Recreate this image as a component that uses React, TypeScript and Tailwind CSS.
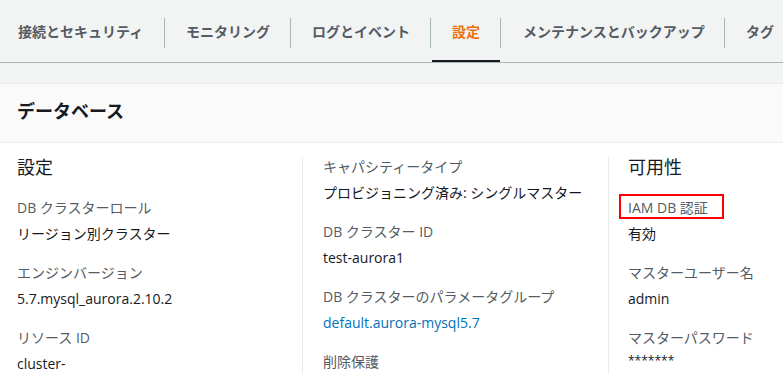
import React from "react";

const font = { fontFamily: '"Open Sans", "Noto Sans CJK JP", sans-serif' };

type Tab = { label: string; w: string; pl: string; active?: boolean };

const tabs: Tab[] = [
  { label: "接続とセキュリティ", w: "w-[164px]", pl: "pl-[18px]" },
  { label: "モニタリング", w: "w-[125px]", pl: "pl-[21px]" },
  { label: "ログとイベント", w: "w-[139px]", pl: "pl-[21px]" },
  { label: "設定", w: "w-[69px]", pl: "pl-[21px]", active: true },
  { label: "メンテナンスとバックアップ", w: "w-[223px]", pl: "pl-[22px]" },
  { label: "タグ", w: "w-[80px]", pl: "pl-[21px]" },
];

function Field({
  label,
  value,
  link,
  boxed,
}: {
  label: string;
  value?: string;
  link?: boolean;
  boxed?: boolean;
}) {
  return (
    <div className="flex flex-col">
      <div className="relative text-[14px] leading-[20px] text-[#545b64] whitespace-nowrap">
        {label}
        {boxed && (
          <span className="absolute left-[-9px] top-[-4px] w-[105px] h-[25px] border-2 border-[#ff0000]" />
        )}
      </div>
      {value !== undefined && (
        <div
          className={
            "mt-[6px] text-[14px] leading-[20px] whitespace-nowrap " +
            (link ? "text-[#0073bb]" : "text-[#16191f]")
          }
        >
          {value}
        </div>
      )}
    </div>
  );
}

export default function App() {
  return (
    <div className="w-full h-[374px] overflow-hidden bg-[#f2f3f3]" style={font}>
      {/* Tabs */}
      <div className="flex h-[63px] border-b border-[#aab7b8]">
        {tabs.map((t, i) => (
          <React.Fragment key={t.label}>
            {i > 0 && <div className="w-px h-[30px] self-center mt-[3px] bg-[#aab7b8] shrink-0" />}
            <div
              className={
                "relative flex items-center h-full shrink-0 whitespace-nowrap text-[14px] font-bold " +
                t.w +
                " " +
                t.pl +
                " " +
                (t.active ? "text-[#ec7211]" : "text-[#545b64]")
              }
            >
              {t.label}
              {t.active && (
                <span className="absolute left-[1px] right-0 bottom-0 h-[2px] bg-[#16191f]" />
              )}
            </div>
          </React.Fragment>
        ))}
      </div>

      {/* Panel */}
      <div className="mt-[20px] bg-white border-t border-[#eaeded]">
        <div className="h-[59px] bg-[#fafafa] border-b border-[#eaeded] flex items-center pl-[17px] pb-[4px]">
          <h2 className="text-[18px] leading-[24px] font-bold text-[#16191f]">データベース</h2>
        </div>

        <div className="flex pt-[14px] pb-[20px]">
          <div className="w-[302px] shrink-0 pl-[17px] flex flex-col gap-[19px]">
            <h3 className="text-[18px] leading-[20px] text-[#16191f] mb-[2px]">設定</h3>
            <Field label="DB クラスターロール" value="リージョン別クラスター" />
            <Field label="エンジンバージョン" value="5.7.mysql_aurora.2.10.2" />
            <Field label="リソース ID" value="cluster-" />
          </div>

          <div className="w-[306px] shrink-0 border-l border-[#eaeded] pl-[20px] flex flex-col gap-[19px]">
            <Field label="キャパシティータイプ" value="プロビジョニング済み: シングルマスター" />
            <Field label="DB クラスター ID" value="test-aurora1" />
            <Field label="DB クラスターのパラメータグループ" value="default.aurora-mysql5.7" link />
            <Field label="削除保護" />
          </div>

          <div className="flex-1 border-l border-[#eaeded] pl-[19px] flex flex-col gap-[19px]">
            <h3 className="text-[18px] leading-[20px] text-[#16191f] mb-[2px]">可用性</h3>
            <Field label="IAM DB 認証" value="有効" boxed />
            <Field label="マスターユーザー名" value="admin" />
            <div className="flex flex-col">
              <div className="text-[14px] leading-[20px] text-[#545b64] whitespace-nowrap">マスターパスワード</div>
              <div className="mt-[3px] text-[12px] leading-[20px] text-[#16191f] whitespace-nowrap">*******</div>
            </div>
          </div>
        </div>
      </div>
    </div>
  );
}
